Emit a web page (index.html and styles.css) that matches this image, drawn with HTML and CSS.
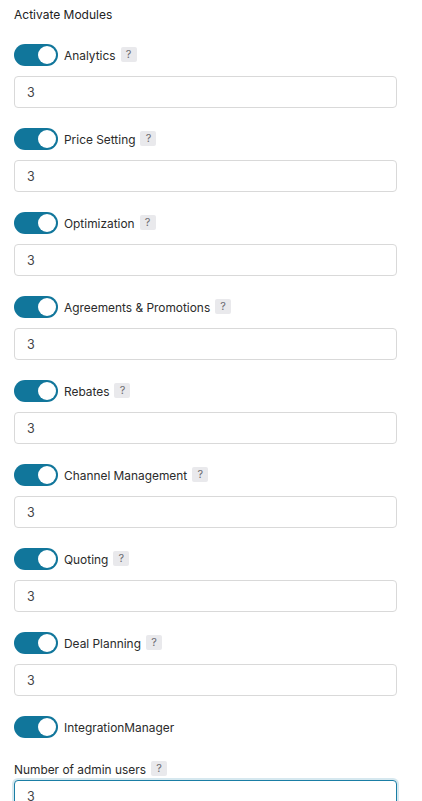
FILE: index.html
```html
<!DOCTYPE html>
<html lang="en">

<head>
    <meta charset="UTF-8">
    <meta name="viewport" content="width=device-width, initial-scale=1.0">
    <title>Activate Modules</title>
    <link rel="stylesheet" href="styles.css">
</head>

<body>
    <div class="settings">
        <h3 class="section-title">Activate Modules</h3>

        <div class="module">
            <label class="switch-row">
                <input type="checkbox" class="switch" checked>
                <span class="switch-label">Analytics</span>
                <span class="hint">?</span>
            </label>
            <input type="text" class="field" value="3">
        </div>

        <div class="module">
            <label class="switch-row">
                <input type="checkbox" class="switch" checked>
                <span class="switch-label">Price Setting</span>
                <span class="hint">?</span>
            </label>
            <input type="text" class="field" value="3">
        </div>

        <div class="module">
            <label class="switch-row">
                <input type="checkbox" class="switch" checked>
                <span class="switch-label">Optimization</span>
                <span class="hint">?</span>
            </label>
            <input type="text" class="field" value="3">
        </div>

        <div class="module">
            <label class="switch-row">
                <input type="checkbox" class="switch" checked>
                <span class="switch-label">Agreements &amp; Promotions</span>
                <span class="hint">?</span>
            </label>
            <input type="text" class="field" value="3">
        </div>

        <div class="module">
            <label class="switch-row">
                <input type="checkbox" class="switch" checked>
                <span class="switch-label">Rebates</span>
                <span class="hint">?</span>
            </label>
            <input type="text" class="field" value="3">
        </div>

        <div class="module">
            <label class="switch-row">
                <input type="checkbox" class="switch" checked>
                <span class="switch-label">Channel Management</span>
                <span class="hint">?</span>
            </label>
            <input type="text" class="field" value="3">
        </div>

        <div class="module">
            <label class="switch-row">
                <input type="checkbox" class="switch" checked>
                <span class="switch-label">Quoting</span>
                <span class="hint">?</span>
            </label>
            <input type="text" class="field" value="3">
        </div>

        <div class="module">
            <label class="switch-row">
                <input type="checkbox" class="switch" checked>
                <span class="switch-label">Deal Planning</span>
                <span class="hint">?</span>
            </label>
            <input type="text" class="field" value="3">
        </div>

        <div class="module">
            <label class="switch-row">
                <input type="checkbox" class="switch" checked>
                <span class="switch-label">IntegrationManager</span>
            </label>
        </div>

        <div class="admin-users">
            <label class="field-label" for="adminUsers">
                Number of admin users
                <span class="hint">?</span>
            </label>
            <input type="text" class="field" id="adminUsers" value="3">
        </div>
    </div>

    <script>
        // focus the admin users field with the caret after the value, without jumping the page
        const adminUsers = document.getElementById("adminUsers");
        adminUsers.focus({ preventScroll: true });
        adminUsers.setSelectionRange(adminUsers.value.length, adminUsers.value.length);
        window.scrollTo(0, 0);
    </script>
</body>

</html>
```

FILE: styles.css
```css
* {
    margin: 0;
    padding: 0;
    box-sizing: border-box;
}

body {
    font-family: Inter, 'Noto Sans', sans-serif;
    font-size: 11.9px;
    color: #2b2b2b;
    background-color: #fff;
}

.settings {
    padding: 7px 25px 0 14px;
}

.section-title {
    font-size: 12px;
    font-weight: 400;
    line-height: 16px;
    color: #222;
    margin-bottom: 21px;
}

.module {
    margin-bottom: 20px;
}

.switch-row {
    display: flex;
    align-items: center;
    height: 22px;
    margin-bottom: 10px;
    cursor: pointer;
}

/* toggle switch drawn from a plain checkbox */
.switch {
    appearance: none;
    -webkit-appearance: none;
    position: relative;
    width: 44px;
    height: 22px;
    border-radius: 11px;
    background-color: #b9c2c9;
    cursor: pointer;
    flex-shrink: 0;
    transition: 0.2s ease-in-out;
}

.switch::after {
    content: "";
    position: absolute;
    top: 2px;
    left: 2px;
    width: 18px;
    height: 18px;
    border-radius: 50%;
    background-color: #fff;
    transition: 0.2s ease-in-out;
}

.switch:checked {
    background-color: #11769b;
}

.switch:checked::after {
    left: 24px;
}

.switch-label {
    margin-left: 6px;
    color: #2b2b2b;
}

.hint {
    display: inline-flex;
    align-items: center;
    justify-content: center;
    width: 16px;
    height: 15px;
    margin-left: 5px;
    margin-top: -2px;
    border-radius: 2px;
    background-color: #e9e9ec;
    color: #6b6b70;
    font-size: 11px;
    line-height: 1;
}

.field {
    display: block;
    width: 100%;
    height: 32px;
    padding: 0 12px;
    border: 1px solid #d9d9d9;
    border-radius: 4px;
    background-color: #fff;
    font-family: inherit;
    font-size: 12.5px;
    color: #444;
}

.field:focus {
    outline: none;
    border-color: #1a7ea5;
    box-shadow: 0 0 0 2px rgba(26, 126, 165, 0.18);
}

.admin-users {
    margin-top: 22px;
}

.field-label {
    display: flex;
    align-items: center;
    height: 18px;
    margin-bottom: 2px;
    color: #2b2b2b;
}

.field-label .hint {
    margin-left: 5px;
}
```
